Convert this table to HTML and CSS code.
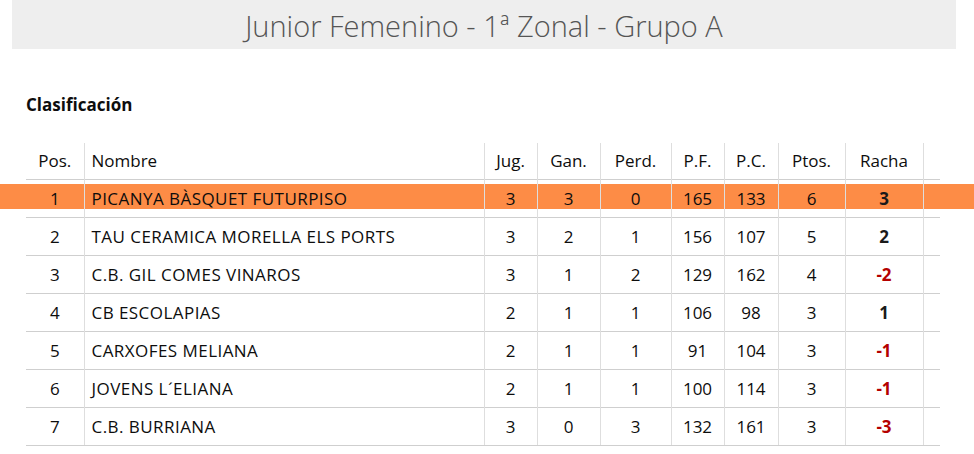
FILE: index.html
```html
<!DOCTYPE html>
<html lang="es">
<head>
<meta charset="utf-8">
<title>Junior Femenino - 1ª Zonal - Grupo A</title>
<link rel="stylesheet" href="styles.css">
</head>
<body>
<div class="page">
  <header class="banner">
    <h1 class="banner-title">Junior Femenino - 1ª Zonal - Grupo A</h1>
  </header>
  <section class="content">
    <h2 class="section-title">Clasificación</h2>
    <table class="standings">
      <thead>
        <tr>
          <th class="c-pos">Pos.</th>
          <th class="c-name">Nombre</th>
          <th class="c-jug">Jug.</th>
          <th class="c-gan">Gan.</th>
          <th class="c-perd">Perd.</th>
          <th class="c-pf">P.F.</th>
          <th class="c-pc">P.C.</th>
          <th class="c-pts">Ptos.</th>
          <th class="c-racha">Racha</th>
          <th class="c-end"></th>
        </tr>
      </thead>
      <tbody>
        <tr class="hl">
          <td>1</td><td class="name">PICANYA BÀSQUET FUTURPISO</td><td>3</td><td>3</td><td>0</td><td>165</td><td>133</td><td>6</td><td class="racha">3</td><td></td>
        </tr>
        <tr>
          <td>2</td><td class="name">TAU CERAMICA MORELLA ELS PORTS</td><td>3</td><td>2</td><td>1</td><td>156</td><td>107</td><td>5</td><td class="racha">2</td><td></td>
        </tr>
        <tr>
          <td>3</td><td class="name">C.B. GIL COMES VINAROS</td><td>3</td><td>1</td><td>2</td><td>129</td><td>162</td><td>4</td><td class="racha neg">-2</td><td></td>
        </tr>
        <tr>
          <td>4</td><td class="name">CB ESCOLAPIAS</td><td>2</td><td>1</td><td>1</td><td>106</td><td>98</td><td>3</td><td class="racha">1</td><td></td>
        </tr>
        <tr>
          <td>5</td><td class="name">CARXOFES MELIANA</td><td>2</td><td>1</td><td>1</td><td>91</td><td>104</td><td>3</td><td class="racha neg">-1</td><td></td>
        </tr>
        <tr>
          <td>6</td><td class="name">JOVENS L´ELIANA</td><td>2</td><td>1</td><td>1</td><td>100</td><td>114</td><td>3</td><td class="racha neg">-1</td><td></td>
        </tr>
        <tr>
          <td>7</td><td class="name">C.B. BURRIANA</td><td>3</td><td>0</td><td>3</td><td>132</td><td>161</td><td>3</td><td class="racha neg">-3</td><td></td>
        </tr>
      </tbody>
    </table>
  </section>
</div>
</body>
</html>
```

FILE: styles.css
```css
* { box-sizing: border-box; }

html {
  background: #fff;
}

body {
  margin: 0;
  padding: 0;
  font-family: "Open Sans", "Liberation Sans", sans-serif;
  color: #0d0d0d;
  font-size: 17px;
}

.page {
  width: 974px;
  overflow: hidden;
}

.banner {
  margin: 0 18px 0 12px;
  height: 49px;
  background: #eeeeee;
  display: flex;
  align-items: center;
  justify-content: center;
}

.banner-title {
  margin: 0;
  font-size: 29px;
  font-weight: 300;
  color: #555;
  line-height: 1;
  padding-top: 1px;
}

.content {
  padding: 0 34px 0 26px;
}

.section-title {
  margin: 45px 0 0 0;
  font-size: 17px;
  font-weight: 700;
  line-height: 22px;
  color: #0d0d0d;
}

.standings {
  margin-top: 27px;
  width: 914px;
  border-collapse: collapse;
  table-layout: fixed;
}

.standings th,
.standings td {
  padding: 0;
  text-align: center;
  font-weight: 400;
  white-space: nowrap;
  border-left: 1px solid #dedede;
}

.standings th:first-child,
.standings td:first-child {
  border-left: none;
}

.standings th {
  height: 36px;
  vertical-align: middle;
}

.standings td {
  height: 38px;
  border-top: 1px solid #cfcfcf;
  position: relative;
}

.standings tbody tr:last-child td {
  border-bottom: 1px solid #cfcfcf;
}

.c-pos { width: 58px; }
.c-name { width: 400px; }
.c-jug { width: 53px; }
.c-gan { width: 63px; }
.c-perd { width: 71px; }
.c-pf { width: 53px; }
.c-pc { width: 54px; }
.c-pts { width: 67px; }
.c-racha { width: 78px; }
.c-end { width: 17px; }

.standings th.c-name,
.standings td.name {
  text-align: left;
  padding-left: 7px;
}

.standings td.name {
  letter-spacing: 0.45px;
}

.standings td.racha {
  font-weight: 700;
  color: #1a1a1a;
}

.standings td.racha.neg {
  color: #b40000;
}

.hl td::before {
  content: "";
  position: absolute;
  top: 4px;
  bottom: 8px;
  left: -1px;
  right: 0;
  background: #fd8c46;
  z-index: -1;
}

.hl td:first-child::before {
  left: -26px;
}

.hl td:last-child::before {
  right: -34px;
}
```
